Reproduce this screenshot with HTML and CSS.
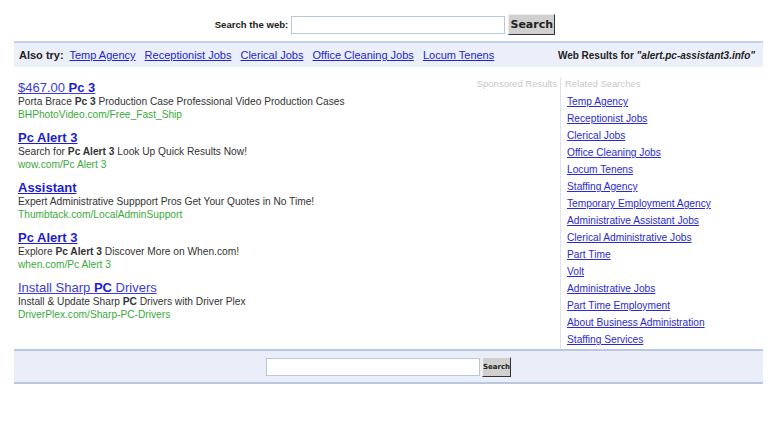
FILE: index.html
```html
<!DOCTYPE html>
<html lang="en">
<head>
  <meta charset="UTF-8">
  <title>alert.pc-assistant3.info</title>
  <link rel="stylesheet" href="styles.css">
</head>
<body>
  <form class="top-search">
    <label for="q">Search the web:</label>
    <input type="text" id="q" class="q">
    <button type="button" class="go">Search</button>
  </form>

  <div class="bar">
    <div class="also">
      <b>Also try:</b>
      <a href="#">Temp Agency</a>
      <a href="#">Receptionist Jobs</a>
      <a href="#">Clerical Jobs</a>
      <a href="#">Office Cleaning Jobs</a>
      <a href="#">Locum Tenens</a>
    </div>
    <div class="results-for">Web Results for <i>"alert.pc-assistant3.info"</i></div>
  </div>

  <div class="main">
    <div class="ads">
      <div class="label">Sponsored Results</div>

      <div class="ad">
        <a class="title light" href="#">$467.00 <b>Pc 3</b></a>
        <div class="desc">Porta Brace <b>Pc 3</b> Production Case Professional Video Production Cases</div>
        <div class="url">BHPhotoVideo.com/Free_Fast_Ship</div>
      </div>
      <div class="ad">
        <a class="title" href="#"><b>Pc Alert 3</b></a>
        <div class="desc">Search for <b>Pc Alert 3</b> Look Up Quick Results Now!</div>
        <div class="url">wow.com/Pc Alert 3</div>
      </div>
      <div class="ad">
        <a class="title" href="#"><b>Assistant</b></a>
        <div class="desc">Expert Administrative Suppport Pros Get Your Quotes in No Time!</div>
        <div class="url">Thumbtack.com/LocalAdminSupport</div>
      </div>
      <div class="ad">
        <a class="title" href="#"><b>Pc Alert 3</b></a>
        <div class="desc">Explore <b>Pc Alert 3</b> Discover More on When.com!</div>
        <div class="url">when.com/Pc Alert 3</div>
      </div>
      <div class="ad">
        <a class="title light" href="#">Install Sharp <b>PC</b> Drivers</a>
        <div class="desc">Install &amp; Update Sharp <b>PC</b> Drivers with Driver Plex</div>
        <div class="url">DriverPlex.com/Sharp-PC-Drivers</div>
      </div>
    </div>

    <div class="related">
      <div class="label">Related Searches</div>
      <ul>
        <li><a href="#">Temp Agency</a></li>
        <li><a href="#">Receptionist Jobs</a></li>
        <li><a href="#">Clerical Jobs</a></li>
        <li><a href="#">Office Cleaning Jobs</a></li>
        <li><a href="#">Locum Tenens</a></li>
        <li><a href="#">Staffing Agency</a></li>
        <li><a href="#">Temporary Employment Agency</a></li>
        <li><a href="#">Administrative Assistant Jobs</a></li>
        <li><a href="#">Clerical Administrative Jobs</a></li>
        <li><a href="#">Part Time</a></li>
        <li><a href="#">Volt</a></li>
        <li><a href="#">Administrative Jobs</a></li>
        <li><a href="#">Part Time Employment</a></li>
        <li><a href="#">About Business Administration</a></li>
        <li><a href="#">Staffing Services</a></li>
      </ul>
    </div>
  </div>

  <form class="bottom-search">
    <input type="text" class="q">
    <button type="button" class="go small">Search</button>
  </form>
</body>
</html>
```

FILE: styles.css
```css
body {
  font-family: 'Liberation Sans', Arial, sans-serif;
  font-size: 10.2px;
  color: #333;
  margin: 0;
  padding: 14px 14px 0;
  background: #fff;
}
a {
  color: #2424cc;
}
.top-search {
  display: flex;
  justify-content: center;
  align-items: center;
  height: 21px;
  margin: 0 0 6px;
  padding-right: 7px;
}
.top-search label {
  font-weight: bold;
  font-size: 9.6px;
  color: #222;
  margin-right: 3px;
}
.q {
  width: 214px;
  height: 18px;
  box-sizing: border-box;
  border: 1px solid #b8c8dc;
  padding: 0 2px;
  margin: 0;
}
.go {
  margin-left: 3px;
  width: 47px;
  height: 21px;
  padding: 0;
  font-family: 'DejaVu Sans', sans-serif;
  font-weight: bold;
  font-size: 11px;
  color: #222;
  background: #d0d0d0;
  border: 1px solid #888;
  border-right-color: #333;
  border-bottom-color: #333;
  border-top-color: #eee;
  border-left-color: #eee;
}
.go.small {
  width: 29px;
  height: 20px;
  font-size: 7px;
  margin-left: 2px;
}
.bar {
  display: flex;
  justify-content: space-between;
  align-items: center;
  height: 24px;
  border-top: 2px solid #c4d2e8;
  background: #eaeff9;
  padding: 0 8px 0 5px;
  font-size: 11px;
}
.also b {
  color: #222;
  margin-right: 3px;
}
.also a {
  margin-right: 6px;
}
.results-for {
  font-weight: bold;
  font-size: 10px;
  color: #222;
}
.main {
  display: flex;
}
.ads {
  flex: 1;
  padding: 13px 3px 0 4px;
}
.label {
  color: #c8c8c8;
  line-height: 13px;
  font-size: 9.5px;
}
.ads .label {
  float: right;
  margin-top: -3px;
}
.ad {
  margin-bottom: 9px;
}
.title {
  display: inline-block;
  font-size: 13px;
  line-height: 15px;
  color: #1c1cd0;
}
.title.light {
  color: #3b3bdd;
}
.title.light b {
  color: #1c1cd0;
}
.desc {
  line-height: 13px;
}
.url {
  line-height: 13px;
  color: #3aaa3a;
}
.related {
  width: 198px;
  margin-top: 10px;
  padding: 0 0 1px 4px;
  border-left: 1px solid #dde4f0;
}
.related .label {
  margin-bottom: 3px;
}
.related ul {
  list-style: none;
  margin: 0;
  padding: 0 0 0 2px;
}
.related li {
  line-height: 17px;
}
.related a {
  color: #2a2ad0;
}
.bottom-search {
  display: flex;
  justify-content: center;
  align-items: center;
  height: 31px;
  margin: 0;
  border-top: 2px solid #b9c8de;
  border-bottom: 2px solid #b9c8de;
  background: #e9eef8;
}
```
